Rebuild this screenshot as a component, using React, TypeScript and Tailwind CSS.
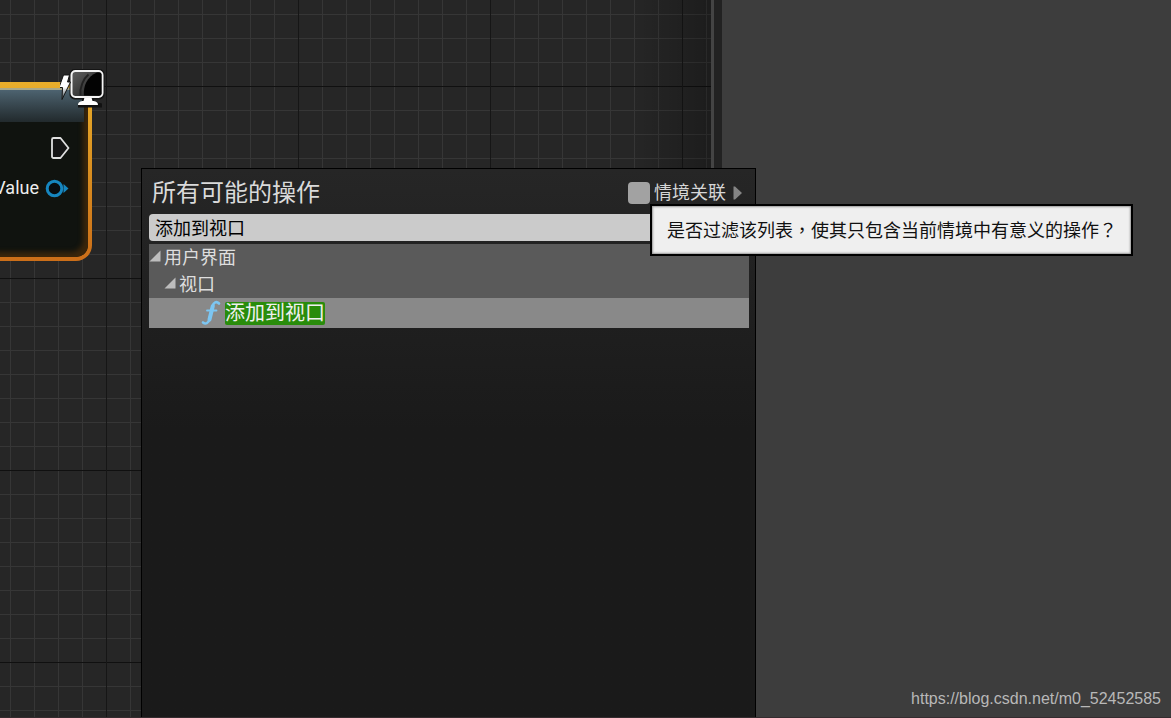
import { useState } from "react";

const GRID =
  "bg-[linear-gradient(to_right,#161616_1px,transparent_1px),linear-gradient(to_bottom,#101010_1px,transparent_1px),linear-gradient(to_right,#363636_1px,transparent_1px),linear-gradient(to_bottom,#363636_1px,transparent_1px)] bg-[size:192px_192px,192px_192px,24px_24px,24px_24px] bg-[position:106px_0px,0px_86px,10px_0px,0px_14px]";

function MonitorIcon() {
  return (
    <svg className="absolute -top-4 -right-4 h-11 w-12" viewBox="0 0 48 44" aria-hidden="true">
      <defs>
        <linearGradient id="screen" x1="0" y1="0" x2="1" y2="1">
          <stop offset="0" stopColor="#606060" />
          <stop offset="1" stopColor="#1c1c1c" />
        </linearGradient>
        <linearGradient id="bolt" x1="0" y1="0" x2="0" y2="1">
          <stop offset="0.5" stopColor="#ffffff" />
          <stop offset="1" stopColor="#34424c" />
        </linearGradient>
      </defs>
      <g transform="translate(-1 0.500)">
        <path d="M23 31h12v4l8 2v4H19v-4l4-2z" fill="#111" />
        <rect x="10.500" y="2.500" width="35" height="30.500" rx="5" fill="#151515" />
        <path d="M25.500 31h7l1 3.500c3 0 5.500 1 5.500 4H19c0-3 2.500-4 5.500-4z" fill="#fff" />
        <rect x="12.500" y="4.500" width="31" height="26" rx="4" fill="url(#screen)" stroke="#f4f4f4" strokeWidth="2" />
        <path d="M38 6h2.500a2 2 0 0 1 2 2v19a2 2 0 0 1-2 2H25C24 20 28 10 38 6z" fill="#030303" />
        <path d="M21.500 29c-1-8 3-17 8-21" fill="none" stroke="#222" strokeWidth="2" />
        <path d="M4.500 8.500h6l-2 7 3 0-8.500 17.500 0.500-12-3.500 0z" fill="url(#bolt)" stroke="#151515" strokeWidth="1" />
      </g>
    </svg>
  );
}

function GraphNode() {
  return (
    <section
      aria-label="Node"
      className="absolute top-[82px] -left-8 h-[179px] w-[124px] rounded-br-2xl bg-linear-to-b from-[#e9ae2b] via-[#d98e20] to-[#cb6e19] pt-1.5 pr-1 pb-1"
    >
      <div className="flex h-full flex-col rounded-br-xl bg-[#10130f] shadow-[inset_-5px_-5px_5px_#3b260b]">
        <div className="mr-1 h-[34px] border-t-2 border-[#a9a88a] bg-linear-to-b from-[#4d6370] to-[#222a2d]" />
        <div className="flex h-12 items-center justify-end pt-1 pr-[18px]">
          <svg className="h-6 w-5" viewBox="0 0 20 24" aria-hidden="true">
            <path d="M3.500 2h7L18.500 12l-8 10h-7a1.500 1.500 0 0 1-1.500-1.500v-17A1.500 1.500 0 0 1 3.500 2z" fill="#151515" stroke="#e0e0e0" strokeWidth="1.800" strokeLinejoin="round" />
          </svg>
        </div>
        <div className="flex items-center justify-end gap-1.5 pt-1 pr-[19px]">
          <span className="text-lg leading-7 text-[#ededed]">Value</span>
          <svg className="h-6 w-6" viewBox="0 0 24 24" aria-hidden="true">
            <circle cx="9.500" cy="12.500" r="7.300" fill="#080d10" stroke="#1686bf" strokeWidth="3" />
            <path d="M18.500 8l5 4.500-5 4.500z" fill="#1686bf" />
          </svg>
        </div>
      </div>
      <MonitorIcon />
    </section>
  );
}

function FunctionIcon() {
  return (
    <svg className="h-7 w-5 shrink-0" viewBox="0 0 20 28" aria-hidden="true">
      <path
        d="M18 4.500C15.500 2 12.500 3 11.500 7.500L8.500 20c-1 4.500-4 5.500-6.500 3.500"
        fill="none"
        stroke="#7cc6f2"
        strokeWidth="2.600"
        strokeLinecap="round"
      />
      <path d="M11.800 7L8.500 20.500" stroke="#7cc6f2" strokeWidth="4" strokeLinecap="round" />
      <path d="M6 11.500h9.500" stroke="#7cc6f2" strokeWidth="1.800" strokeLinecap="round" />
    </svg>
  );
}

function Expander() {
  return (
    <svg className="mt-[-3px] h-3 w-3 shrink-0" viewBox="0 0 12 12" aria-hidden="true">
      <path d="M11.500 0.500v11H0.500z" fill="#bdbdbd" />
    </svg>
  );
}

function ActionMenu() {
  const [query, setQuery] = useState("添加到视口");
  const [contextual, setContextual] = useState(false);
  return (
    <section
      aria-label="所有可能的操作"
      className="absolute top-[168px] bottom-0 left-[141px] w-[615px] border border-b-0 border-black bg-linear-to-b from-[#262626] to-[#1a1a1a] to-[260px] pr-1.5 pl-[7px]"
    >
      <header className="flex h-[45px] items-center justify-between pt-0.5 pr-1.5 pl-[3px]">
        <h1 className="text-2xl leading-8 text-[#dadada]">所有可能的操作</h1>
        <div className="flex items-center gap-[7px]">
          <label className="flex items-center gap-1 text-lg leading-6 text-[#d6d6d6]">
            <input
              type="checkbox"
              checked={contextual}
              onChange={(e) => setContextual(e.target.checked)}
              className="h-[22px] w-[22px] appearance-none rounded-sm bg-[#a2a2a2] checked:bg-[#d08a22]"
            />
            情境关联
          </label>
          <button type="button" aria-label="展开" className="block">
            <svg className="h-3.5 w-2.5" viewBox="0 0 10 14" aria-hidden="true">
              <path d="M0.500 0.500H2L9 7l-7 6.500H0.500z" fill="#858585" />
            </svg>
          </button>
        </div>
      </header>
      <input
        type="text"
        aria-label="搜索"
        value={query}
        onChange={(e) => setQuery(e.target.value)}
        className="block h-[27px] w-full rounded-sm bg-[#cbcbcb] px-1.5 pb-0.5 text-lg leading-6 text-black outline-none"
      />
      <ul className="mt-[3px] bg-[#5a5a5a] text-lg leading-[27px] text-[#dedede]">
        <li>
          <div className="flex items-center gap-[3px]">
            <Expander />
            用户界面
          </div>
          <ul>
            <li>
              <div className="flex items-center gap-[3px] pl-[15px]">
                <Expander />
                视口
              </div>
              <ul>
                <li className="flex h-[30px] items-center gap-1 bg-[#898989] pl-[52px]">
                  <FunctionIcon />
                  <mark className="rounded-xs bg-[#298c0b] text-xl leading-[23px] text-[#f0f0f0]">添加到视口</mark>
                </li>
              </ul>
            </li>
          </ul>
        </li>
      </ul>
    </section>
  );
}

function Punctuation({ children }: { children: string }) {
  return <span className="font-['Noto_Sans_CJK_TC',sans-serif]">{children}</span>;
}

export default function App() {
  return (
    <div className="relative flex min-h-screen overflow-hidden border-b border-[#352c2f] bg-[#3d3d3d] font-[Roboto,'Noto_Sans_CJK_SC',sans-serif]">
      <main className={`relative flex-1 bg-[#262626] ${GRID}`}>
        <div className="absolute inset-y-0 right-0 w-20 bg-linear-to-r from-transparent to-black/25" />
        <GraphNode />
      </main>
      <div className="w-[11px] border-l-3 border-[#444444] bg-[#222222]" />
      <aside className="flex w-[449px] flex-col justify-end bg-[#3d3d3d] pr-2.5 pb-1.5">
        <a
          href="https://blog.csdn.net/m0_52452585"
          className="text-right font-['Liberation_Sans',sans-serif] text-base leading-6 text-[#b8b8b8]"
        >
          https://blog.csdn.net/m0_52452585
        </a>
      </aside>
      <ActionMenu />
      <div
        role="tooltip"
        className="absolute top-[204px] left-[650px] border-2 border-black bg-[#efefef] py-[11px] pr-3.5 pl-[15px] text-lg leading-6 whitespace-nowrap text-[#111111] shadow-[inset_0_0_2px_1px_#999999]"
      >
        是否过滤该列表<Punctuation>，</Punctuation>使其只包含当前情境中有意义的操作<Punctuation>？</Punctuation>
      </div>
    </div>
  );
}
